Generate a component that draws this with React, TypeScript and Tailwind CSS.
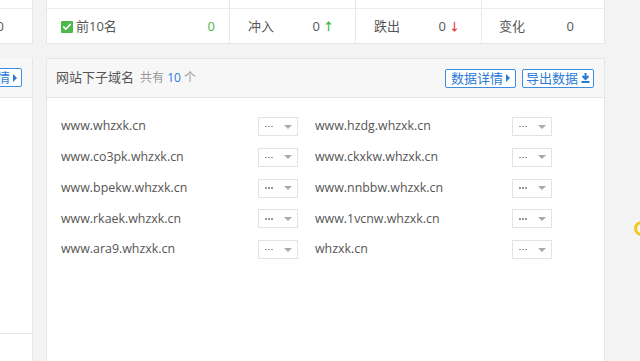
import { Check } from "lucide-react";

const left = [
  "www.whzxk.cn",
  "www.co3pk.whzxk.cn",
  "www.bpekw.whzxk.cn",
  "www.rkaek.whzxk.cn",
  "www.ara9.whzxk.cn",
];
const right = [
  "www.hzdg.whzxk.cn",
  "www.ckxkw.whzxk.cn",
  "www.nnbbw.whzxk.cn",
  "www.1vcnw.whzxk.cn",
  "whzxk.cn",
];

const font = "font-['Open_Sans','Noto_Sans_CJK_SC',sans-serif]";

// 小下拉框：省略号 + 三角
function MiniSelect() {
  return (
    <div className="flex h-[19px] w-[40px] shrink-0 items-center justify-between border border-[#e3e3e3] bg-white pl-[6px] pr-[5px]">
      <span className="flex gap-[1.5px]">
        <span className="h-[1.5px] w-[1.5px] bg-[#999]" />
        <span className="h-[1.5px] w-[1.5px] bg-[#999]" />
        <span className="h-[1.5px] w-[1.5px] bg-[#999]" />
      </span>
      <span className="h-0 w-0 border-x-[4px] border-t-[4px] border-x-transparent border-t-[#aaa]" />
    </div>
  );
}

function Domain({ name }: { name: string }) {
  return (
    <div className="flex h-[19px] items-center">
      <span className="w-[197px] text-[12.4px] text-[#555]">{name}</span>
      <MiniSelect />
    </div>
  );
}

function BlueBtn({ label, icon }: { label: string; icon: "right" | "down" }) {
  return (
    <button
      className={`flex h-[19px] items-center gap-[3px] rounded-[2px] border border-[#3c8de0] bg-white text-[13px] leading-none text-[#2a7ad6] ${
        icon === "right" ? "px-[5px]" : "px-[3px]"
      }`}
    >
      {label}
      {icon === "right" ? (
        <span className="h-0 w-0 border-y-[4px] border-l-[4px] border-y-transparent border-l-[#2a7ad6]" />
      ) : (
        <svg width="9" height="10" viewBox="0 0 9 10">
          <path d="M4.5 0v5.5M1.5 3l3 3 3-3" stroke="#2a7ad6" strokeWidth="2" fill="none" />
          <rect x="0.5" y="8" width="8" height="2" fill="#2a7ad6" />
        </svg>
      )}
    </button>
  );
}

function Cell({ label, value, arrow }: { label: string; value: string; arrow: "up" | "down" }) {
  return (
    <div className="flex items-center justify-between border-l border-[#e8e8e8] pl-[18px] pr-[21px] pt-[2px]">
      <span className="text-[13px] text-[#555]">{label}</span>
      <span className="flex items-center gap-[3px] text-[13px] text-[#555]">
        {value}
        {arrow === "up" && <span className="text-[11px] font-bold text-[#3bb33b]">↑</span>}
        {arrow === "down" && <span className="text-[11px] font-bold text-[#e83b3b]">↓</span>}
      </span>
    </div>
  );
}

export default function App() {
  return (
    <div className={`flex h-[361px] w-[640px] gap-[13px] overflow-hidden bg-[#f3f3f3] ${font}`}>
      {/* 左侧被截断的卡片 */}
      <div className="flex w-[33px] shrink-0 flex-col gap-[14px] overflow-hidden">
        <div className="flex h-[44px] flex-col border-b border-r border-[#e6e6e6] bg-white">
          <div className="h-[9px] border-b border-[#ececec]" />
          <div className="flex flex-1 items-center justify-end pr-[28px] pt-[2px] text-[13px] text-[#555]">0</div>
        </div>
        <div className="flex flex-1 flex-col border-r border-[#e6e6e6] bg-white">
          <div className="flex h-[40px] items-center justify-end border-b border-[#e6e6e6] bg-[#f7f7f7] pr-[10px]">
            <button className="flex h-[19px] items-center gap-[3px] rounded-[2px] border border-[#3c8de0] bg-white pr-[4px] text-[13px] leading-none text-[#2a7ad6]">
              情
              <span className="h-0 w-0 border-y-[4px] border-l-[4px] border-y-transparent border-l-[#2a7ad6]" />
            </button>
          </div>
          <div className="mt-auto mb-[27px] border-b border-[#e6e6e6]" />
        </div>
      </div>

      {/* 主区域 */}
      <div className="flex w-[559px] shrink-0 flex-col gap-[14px]">
        <div className="flex h-[44px] flex-col border border-t-0 border-[#e6e6e6] bg-white">
          <div className="grid h-[9px] grid-cols-[182px_126px_126px_1fr] border-b border-[#ececec]">
            <div />
            <div className="border-l border-[#e8e8e8]" />
            <div className="border-l border-[#e8e8e8]" />
            <div className="border-l border-[#e8e8e8]" />
          </div>
          <div className="grid flex-1 grid-cols-[182px_126px_126px_1fr]">
            <div className="flex items-center justify-between px-[14px] pt-[2px]">
              <span className="flex items-center gap-[3px] text-[13px] text-[#555]">
                <span className="flex h-[12px] w-[12px] items-center justify-center rounded-[1px] bg-[#4cb84c]">
                  <Check size={10} strokeWidth={4} color="#fff" />
                </span>
                前10名
              </span>
              <span className="text-[13px] text-[#4cb84c]">0</span>
            </div>
            <Cell label="冲入" value="0" arrow="up" />
            <Cell label="跌出" value="0" arrow="down" />
            <div className="flex items-center justify-between border-l border-[#e8e8e8] pl-[17px] pr-[30px] pt-[2px] text-[13px] text-[#555]">
              <span>变化</span>
              <span>0</span>
            </div>
          </div>
        </div>

        <div className="flex flex-1 flex-col border border-b-0 border-[#e6e6e6] bg-white">
          <div className="flex h-[39px] items-center justify-between border-b border-[#e6e6e6] bg-[#f7f7f7] pl-[9px] pr-[10px]">
            <div className="flex items-center gap-[6px] text-[13px]">
              <span className="text-[#555]">网站下子域名</span>
              <span className="text-[12px] text-[#999]">
                共有 <span className="text-[#2a7ad6]">10</span> 个
              </span>
            </div>
            <div className="flex gap-[6px]">
              <BlueBtn label="数据详情" icon="right" />
              <BlueBtn label="导出数据" icon="down" />
            </div>
          </div>
          <div className="grid grid-cols-[254px_1fr] pl-[14px] pt-[19px]">
            <div className="flex flex-col gap-[11.8px]">
              {left.map((d) => (
                <Domain key={d} name={d} />
              ))}
            </div>
            <div className="flex flex-col gap-[11.8px]">
              {right.map((d) => (
                <Domain key={d} name={d} />
              ))}
            </div>
          </div>
        </div>
      </div>

      {/* 右侧 */}
      <div className="flex flex-1 flex-col pt-[221px] pl-[16px]">
        <div className="h-[15px] w-[15px] rounded-full border-[3px] border-[#f2c81c]" />
      </div>
    </div>
  );
}
